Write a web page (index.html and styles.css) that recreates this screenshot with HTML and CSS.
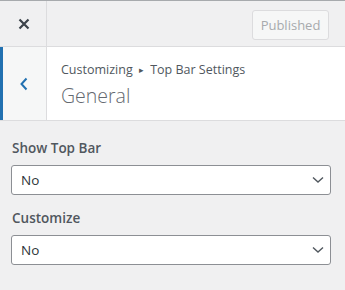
FILE: index.html
```html
<!DOCTYPE html>
<html lang="en">
<head>
    <meta charset="UTF-8">
    <meta name="viewport" content="width=device-width, initial-scale=1.0">
    <title>Customizer - General</title>
    <link rel="stylesheet" href="styles.css">
</head>
<body>
    <div class="customizer">
        <!-- Top header with close and publish -->
        <div class="header">
            <button class="close-btn" aria-label="Close">
                <svg width="12" height="12" viewBox="0 0 12 12">
                    <path d="M1.5 1.5 L10.5 10.5 M10.5 1.5 L1.5 10.5" stroke="#3c434a" stroke-width="2.2" fill="none"/>
                </svg>
            </button>
            <div class="header-actions">
                <button class="publish-btn" disabled>Published</button>
            </div>
        </div>

        <!-- Section title with back button -->
        <div class="section-title">
            <button class="back-btn" aria-label="Back">
                <svg width="10" height="14" viewBox="0 0 10 14">
                    <path d="M7.5 1.5 L2.5 7 L7.5 12.5" stroke="#2271b1" stroke-width="2" fill="none"/>
                </svg>
            </button>
            <div class="title-text">
                <span class="crumb">Customizing <span class="arrow">&#9656;</span> Top Bar Settings</span>
                <h3>General</h3>
            </div>
        </div>

        <!-- Controls -->
        <div class="controls">
            <div class="control">
                <label class="control-title">Show Top Bar</label>
                <div class="select-box">
                    <span>No</span>
                    <svg width="12" height="8" viewBox="0 0 12 8">
                        <path d="M1 1.5 L6 6 L11 1.5" stroke="#50575e" stroke-width="1.4" fill="none"/>
                    </svg>
                </div>
            </div>
            <div class="control">
                <label class="control-title">Customize</label>
                <div class="select-box">
                    <span>No</span>
                    <svg width="12" height="8" viewBox="0 0 12 8">
                        <path d="M1 1.5 L6 6 L11 1.5" stroke="#50575e" stroke-width="1.4" fill="none"/>
                    </svg>
                </div>
            </div>
        </div>
    </div>
</body>
</html>
```

FILE: styles.css
```css
* {
    margin: 0;
    padding: 0;
    box-sizing: border-box;
}

body {
    background: #f0f0f1;
    font-family: 'Open Sans', 'Noto Sans', sans-serif;
    color: #3c434a;
    height: 290px;
    overflow: hidden;
}

.customizer {
    border-top: 1px solid #a7aaad;
}

/* Header */
.header {
    display: flex;
    height: 46px;
    border-bottom: 1px solid #dcdcde;
}

.close-btn {
    width: 47px;
    border: none;
    border-right: 1px solid #dcdcde;
    background: #f0f0f1;
    display: flex;
    align-items: center;
    justify-content: center;
    padding-left: 1px;
}

.header-actions {
    flex: 1;
    display: flex;
    justify-content: flex-end;
    align-items: flex-start;
    padding: 9px 16px 0 0;
}

.publish-btn {
    width: 77px;
    height: 30px;
    border: 1px solid #dcdcde;
    border-radius: 3px;
    background: #f6f7f7;
    color: #a7aaad;
    font-family: inherit;
    font-size: 13px;
}

/* Section title */
.section-title {
    display: flex;
    height: 74px;
    background: #fff;
    border-bottom: 1px solid #dcdcde;
}

.back-btn {
    width: 47px;
    border: none;
    border-left: 3px solid #2271b1;
    border-right: 1px solid #dcdcde;
    background: #f6f7f7;
    display: flex;
    align-items: center;
    justify-content: center;
    padding-right: 2px;
}

.title-text {
    display: flex;
    flex-direction: column;
    justify-content: center;
    padding: 1px 0 0 14px;
}

.crumb {
    font-size: 12.5px;
    line-height: 20px;
    color: #50575e;
}

.crumb .arrow {
    font-size: 9px;
    margin: 0 3px;
    position: relative;
    top: -1px;
}

.title-text h3 {
    font-size: 19.5px;
    font-weight: 300;
    line-height: 26px;
    color: #646970;
    margin-top: 2px;
}

/* Controls */
.controls {
    padding: 17px 14px 0 11px;
}

.control {
    margin-bottom: 13px;
}

.control-title {
    display: block;
    font-size: 13.5px;
    font-weight: 600;
    line-height: 20px;
    color: #50575e;
    margin: 0 0 7px 1px;
}

.select-box {
    height: 30px;
    border: 1px solid #8c8f94;
    border-radius: 3px;
    background: #fff;
    display: flex;
    align-items: center;
    justify-content: space-between;
    padding: 0 6px 0 9px;
    font-size: 13.5px;
    color: #2c3338;
}
```
